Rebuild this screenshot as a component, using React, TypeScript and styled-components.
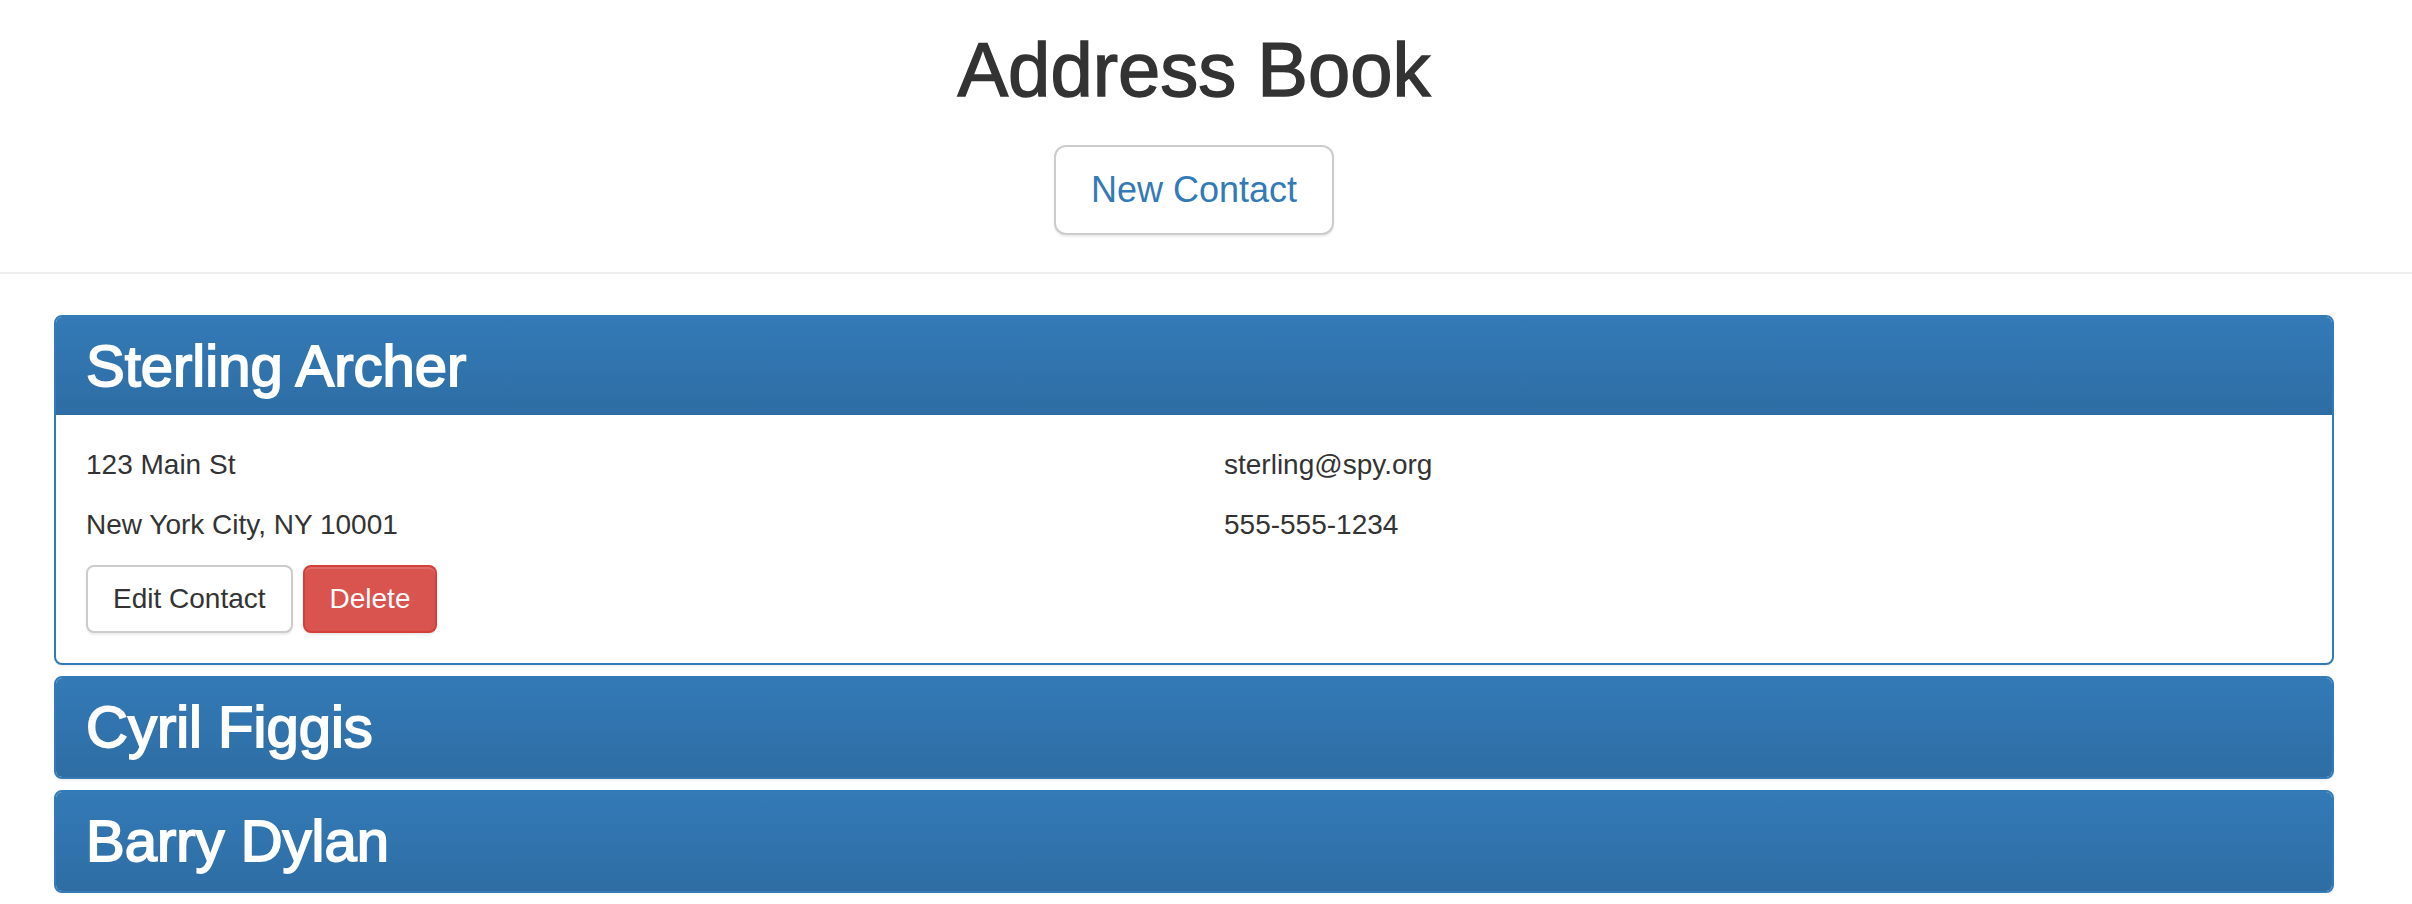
import React from 'react'
import styled, { createGlobalStyle } from 'styled-components'

type Contact = {
  name: string
  street?: string
  city?: string
  email?: string
  phone?: string
  open?: boolean
}

const contacts: Contact[] = [
  {
    name: 'Sterling Archer',
    street: '123 Main St',
    city: 'New York City, NY 10001',
    email: 'sterling@spy.org',
    phone: '555-555-1234',
    open: true,
  },
  { name: 'Cyril Figgis' },
  { name: 'Barry Dylan' },
]

const App = () => {
  return (
    <>
      <GlobalStyle />
      <Header>
        <Title>Address Book</Title>
        <NewButton>New Contact</NewButton>
      </Header>
      <List>
        {contacts.map((c) => (
          <Panel key={c.name}>
            <PanelHeading $open={!!c.open}>
              <PanelTitle>{c.name}</PanelTitle>
            </PanelHeading>
            {c.open && (
              <PanelBody>
                <Column>
                  <Line>{c.street}</Line>
                  <Line>{c.city}</Line>
                  <Actions>
                    <Button>Edit Contact</Button>
                    <Button $danger>Delete</Button>
                  </Actions>
                </Column>
                <Column>
                  <Line>{c.email}</Line>
                  <Line>{c.phone}</Line>
                </Column>
              </PanelBody>
            )}
          </Panel>
        ))}
      </List>
    </>
  )
}

const GlobalStyle = createGlobalStyle`
  body {
    margin: 0;
    background: #fff;
    color: #333;
    font-family: "Liberation Sans", Arial, Helvetica, sans-serif;
  }
`

const Header = styled.header`
  display: flex;
  flex-direction: column;
  align-items: center;
  padding: 30px 24px 37px 0;
  border-bottom: 2px solid #eee;
`

const Title = styled.h1`
  margin: 0;
  font-size: 76px;
  line-height: 80px;
  font-weight: 400;
  -webkit-text-stroke: 1.4px #333;
  color: #333;
`

const NewButton = styled.button`
  margin-top: 35px;
  height: 90px;
  padding: 0 35px;
  font-family: inherit;
  font-size: 36px;
  color: #337ab7;
  background: #fff;
  border: 2px solid #ccc;
  border-radius: 12px;
  box-shadow: 0 2px 2px rgba(0, 0, 0, 0.075);
`

const List = styled.main`
  margin: 41px 78px 0 54px;
  display: flex;
  flex-direction: column;
  gap: 11px;
`

const Panel = styled.section`
  border: 2px solid #337ab7;
  border-radius: 8px;
  background: #fff;
  box-shadow: 0 2px 2px rgba(0, 0, 0, 0.05);
  overflow: hidden;
`

const PanelHeading = styled.div<{ $open: boolean }>`
  padding: ${(p) => (p.$open ? '17px 30px 17px' : '17px 30px 18px')};
  background: linear-gradient(to bottom, #337ab7 0, #2e6da4 100%);
  color: #fff;
`

const PanelTitle = styled.h2`
  margin: 0;
  font-size: 58px;
  line-height: 64px;
  font-weight: 400;
  -webkit-text-stroke: 1.8px #fff;
`

const PanelBody = styled.div`
  display: grid;
  grid-template-columns: 1fr 1fr;
  column-gap: 60px;
  padding: 30px;
`

const Column = styled.div`
  display: flex;
  flex-direction: column;
`

const Line = styled.p`
  margin: 0 0 20px;
  font-size: 28px;
  line-height: 40px;
`

const Actions = styled.div`
  display: flex;
  gap: 10px;
`

const Button = styled.button<{ $danger?: boolean }>`
  height: 68px;
  padding: 0 25px;
  font-family: inherit;
  font-size: 28px;
  border-radius: 8px;
  border: 2px solid ${(p) => (p.$danger ? '#d43f3a' : '#ccc')};
  background: ${(p) => (p.$danger ? '#d9534f' : '#fff')};
  color: ${(p) => (p.$danger ? '#fff' : '#333')};
  box-shadow: inset 0 2px 0 rgba(255, 255, 255, 0.15),
    0 2px 2px rgba(0, 0, 0, 0.075);
`

export default App
